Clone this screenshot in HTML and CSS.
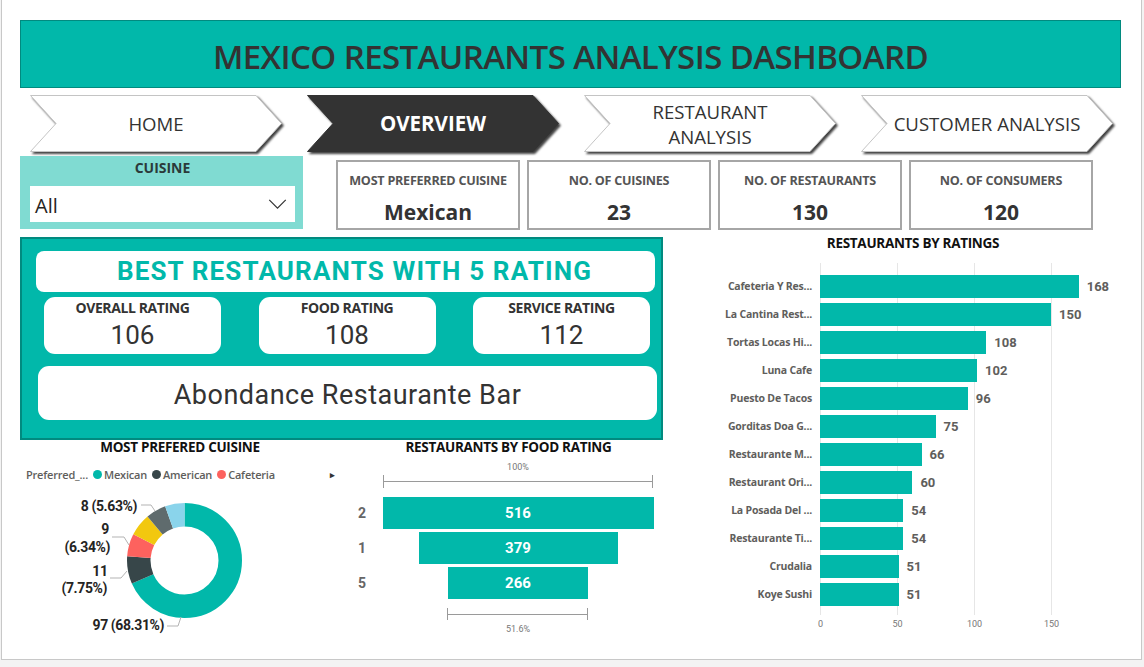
FILE: index.html
```html
<!DOCTYPE html>
<html>
<head>
<meta charset="utf-8">
<title>Mexico Restaurants Analysis Dashboard</title>
<link rel="stylesheet" href="styles.css">
</head>
<body>
<div class="canvas">
  <header class="title">MEXICO RESTAURANTS ANALYSIS DASHBOARD</header>

  <nav class="nav">
    <div class="nav-item">
      <svg class="arrow" viewBox="0 0 252 57"><polygon points="0.5,0.5 226,0.5 251.5,28.5 226,56.5 0.5,56.5 26,28.5"/></svg>
      <span class="nav-label">HOME</span>
    </div>
    <div class="nav-item active">
      <svg class="arrow" viewBox="0 0 252 57"><polygon points="0.5,0.5 226,0.5 251.5,28.5 226,56.5 0.5,56.5 26,28.5"/></svg>
      <span class="nav-label">OVERVIEW</span>
    </div>
    <div class="nav-item">
      <svg class="arrow" viewBox="0 0 252 57"><polygon points="0.5,0.5 226,0.5 251.5,28.5 226,56.5 0.5,56.5 26,28.5"/></svg>
      <span class="nav-label">RESTAURANT<br>ANALYSIS</span>
    </div>
    <div class="nav-item">
      <svg class="arrow" viewBox="0 0 252 57"><polygon points="0.5,0.5 226,0.5 251.5,28.5 226,56.5 0.5,56.5 26,28.5"/></svg>
      <span class="nav-label">CUSTOMER ANALYSIS</span>
    </div>
  </nav>

  <section class="row2">
    <div class="slicer">
      <div class="slicer-title">CUISINE</div>
      <div class="dropdown">
        <span class="dropdown-value">All</span>
        <svg class="chev" viewBox="0 0 20 12"><polyline points="1,1 10,10 19,1"/></svg>
      </div>
    </div>
    <div class="kpis">
      <div class="kpi"><div class="kpi-label">MOST PREFERRED CUISINE</div><div class="kpi-value">Mexican</div></div>
      <div class="kpi"><div class="kpi-label">NO. OF CUISINES</div><div class="kpi-value">23</div></div>
      <div class="kpi"><div class="kpi-label">NO. OF RESTAURANTS</div><div class="kpi-value">130</div></div>
      <div class="kpi"><div class="kpi-label">NO. OF CONSUMERS</div><div class="kpi-value">120</div></div>
    </div>
  </section>

  <section class="main">
    <div class="left">
      <div class="best">
        <div class="best-head">BEST RESTAURANTS WITH 5 RATING</div>
        <div class="ratings">
          <div class="rating"><div class="rating-label">OVERALL RATING</div><div class="rating-value">106</div></div>
          <div class="rating"><div class="rating-label">FOOD RATING</div><div class="rating-value">108</div></div>
          <div class="rating"><div class="rating-label">SERVICE RATING</div><div class="rating-value">112</div></div>
        </div>
        <div class="best-name">Abondance Restaurante Bar</div>
      </div>

      <div class="charts">
        <div class="donut-chart">
          <div class="chart-title">MOST PREFERED CUISINE</div>
          <div class="legend">
            <span class="legend-title">Preferred_...</span>
            <span class="legend-item"><i class="dot teal"></i>Mexican</span>
            <span class="legend-item"><i class="dot dark"></i>American</span>
            <span class="legend-item"><i class="dot red"></i>Cafeteria</span>
            <span class="legend-more">&#9656;</span>
          </div>
          <svg class="donut" viewBox="0 0 320 170" width="320" height="170">
            <g transform="rotate(-90 164.5 75.5)" fill="none" stroke-width="23.5">
              <circle cx="164.5" cy="75.5" r="45.75" stroke="#01B8AA" stroke-dasharray="196.36 287.46" stroke-dashoffset="0"/>
              <circle cx="164.5" cy="75.5" r="45.75" stroke="#374649" stroke-dasharray="22.27 287.46" stroke-dashoffset="-196.36"/>
              <circle cx="164.5" cy="75.5" r="45.75" stroke="#FD625E" stroke-dasharray="18.22 287.46" stroke-dashoffset="-218.63"/>
              <circle cx="164.5" cy="75.5" r="45.75" stroke="#F2C80F" stroke-dasharray="18.22 287.46" stroke-dashoffset="-236.85"/>
              <circle cx="164.5" cy="75.5" r="45.75" stroke="#5F6B6D" stroke-dasharray="16.20 287.46" stroke-dashoffset="-255.07"/>
              <circle cx="164.5" cy="75.5" r="45.75" stroke="#8AD4EB" stroke-dasharray="16.20 287.46" stroke-dashoffset="-271.27"/>
            </g>
            <g class="leaders" fill="none" stroke="#b3b3b3" stroke-width="1">
              <polyline points="121,20 131,20 135,26"/>
              <polyline points="92,52 104,52 109,60"/>
              <polyline points="90,93 101,93 107,86"/>
              <polyline points="147,141 158,141 161,132"/>
            </g>
            <g class="dlabels">
              <text x="117" y="26" text-anchor="end">8 (5.63%)</text>
              <text x="85" y="49" text-anchor="middle">9</text>
              <text x="90" y="67" text-anchor="end">(6.34%)</text>
              <text x="80" y="91" text-anchor="middle">11</text>
              <text x="87" y="108" text-anchor="end">(7.75%)</text>
              <text x="144" y="145" text-anchor="end">97 (68.31%)</text>
            </g>
          </svg>
        </div>

        <div class="funnel-chart">
          <div class="chart-title funnel-title">RESTAURANTS BY FOOD RATING</div>
          <div class="funnel-body">
            <div class="pct">100%</div>
            <div class="bracket bracket-top"></div>
            <div class="funnel-rows">
              <div class="frow"><span class="flabel">2</span><div class="ftrack"><div class="fbar" style="width:271px">516</div></div></div>
              <div class="frow"><span class="flabel">1</span><div class="ftrack"><div class="fbar" style="width:199px">379</div></div></div>
              <div class="frow"><span class="flabel">5</span><div class="ftrack"><div class="fbar" style="width:140px">266</div></div></div>
            </div>
            <div class="bracket bracket-bottom"></div>
            <div class="pct">51.6%</div>
          </div>
        </div>
      </div>
    </div>

    <div class="right">
      <div class="chart-title">RESTAURANTS BY RATINGS</div>
      <div class="bar-body">
        <div class="cat-labels">
          <span>Cafeteria Y Res...</span>
          <span>La Cantina Rest...</span>
          <span>Tortas Locas Hi...</span>
          <span>Luna Cafe</span>
          <span>Puesto De Tacos</span>
          <span>Gorditas Doa G...</span>
          <span>Restaurante M...</span>
          <span>Restaurant Ori...</span>
          <span>La Posada Del ...</span>
          <span>Restaurante Ti...</span>
          <span>Crudalia</span>
          <span>Koye Sushi</span>
        </div>
        <div class="plot">
          <div class="brow"><div class="bar" style="width:258.7px"></div><span class="bval">168</span></div>
          <div class="brow"><div class="bar" style="width:231px"></div><span class="bval">150</span></div>
          <div class="brow"><div class="bar" style="width:166.3px"></div><span class="bval">108</span></div>
          <div class="brow"><div class="bar" style="width:157.1px"></div><span class="bval">102</span></div>
          <div class="brow"><div class="bar" style="width:147.8px"></div><span class="bval">96</span></div>
          <div class="brow"><div class="bar" style="width:115.5px"></div><span class="bval">75</span></div>
          <div class="brow"><div class="bar" style="width:101.6px"></div><span class="bval">66</span></div>
          <div class="brow"><div class="bar" style="width:92.4px"></div><span class="bval">60</span></div>
          <div class="brow"><div class="bar" style="width:83.2px"></div><span class="bval">54</span></div>
          <div class="brow"><div class="bar" style="width:83.2px"></div><span class="bval">54</span></div>
          <div class="brow"><div class="bar" style="width:78.5px"></div><span class="bval">51</span></div>
          <div class="brow"><div class="bar" style="width:78.5px"></div><span class="bval">51</span></div>
        </div>
        <div></div>
        <div class="ticks"><span>0</span><span>50</span><span>100</span><span>150</span></div>
      </div>
    </div>
  </section>
</div>
</body>
</html>
```

FILE: styles.css
```css
* { box-sizing: border-box; }

body {
  margin: 0;
  background: #f3f3f3;
  font-family: "Open Sans", "Noto Sans", sans-serif;
  color: #333;
}

.canvas {
  width: 1141px;
  height: 660px;
  margin-left: 1px;
  background: #fff;
  border-left: 1px solid #c8c8c8;
  border-right: 1px solid #c8c8c8;
  border-bottom: 1px solid #c8c8c8;
  padding: 20px 0 0 18px;
}

/* Title */
.title {
  width: 1101px;
  height: 68px;
  background: #01b8aa;
  border: 1px solid #018a7f;
  display: flex;
  align-items: center;
  justify-content: center;
  padding-top: 5px;
  font-size: 33px;
  font-weight: 600;
  letter-spacing: -0.6px;
  color: #333;
}

/* Navigation */
.nav {
  display: flex;
  gap: 25px;
  margin: 7px 0 0 10px;
  height: 57px;
}
.nav-item {
  width: 252px;
  height: 57px;
  display: grid;
}
.nav-item > * { grid-area: 1 / 1; }
.arrow {
  width: 252px;
  height: 57px;
  overflow: visible;
  filter: drop-shadow(2px 2px 1px rgba(0, 0, 0, 0.75));
}
.arrow polygon {
  fill: #fff;
  stroke: #c4c4c4;
  stroke-width: 1;
}
.nav-item.active .arrow polygon {
  fill: #333;
  stroke: #333;
}
.nav-label {
  position: relative;
  place-self: center;
  text-align: center;
  font-size: 18.6px;
  line-height: 25px;
  color: #333;
}
.nav-item.active .nav-label {
  color: #fff;
  font-weight: 700;
  font-size: 20.5px;
}

/* Row 2 */
.row2 {
  display: flex;
  align-items: flex-start;
  margin-top: 4px;
  height: 74px;
}
.slicer {
  width: 283px;
  height: 73px;
  background: #80dbd2;
  padding: 4px 8px 0 10px;
}
.slicer-title {
  text-align: center;
  font-size: 14px;
  line-height: 16px;
  font-weight: 700;
  color: #2b3a3a;
}
.dropdown {
  margin-top: 10px;
  height: 36px;
  background: #fff;
  display: flex;
  align-items: center;
  justify-content: space-between;
  padding: 0 8px 0 5px;
}
.dropdown-value {
  font-size: 20px;
  color: #252423;
  padding-top: 3px;
}
.chev {
  width: 19px;
  height: 11px;
  fill: none;
  stroke: #333;
  stroke-width: 1.3;
}

.kpis {
  display: flex;
  gap: 7px;
  margin: 4px 0 0 33px;
}
.kpi {
  width: 184px;
  height: 70px;
  border: 2px solid #a6a6a6;
  padding-top: 10px;
  text-align: center;
}
.kpi-label {
  font-size: 12.6px;
  line-height: 18px;
  font-weight: 700;
  color: #555;
  letter-spacing: -0.25px;
}
.kpi-value {
  margin-top: 8px;
  font-size: 21px;
  line-height: 28px;
  font-weight: 700;
  color: #333;
}

/* Main */
.main {
  display: flex;
  margin-top: 7px;
}
.left { width: 643px; }

.best {
  height: 203px;
  background: #01b8aa;
  border: 2px solid #018a7f;
  padding: 12px 0 0 14px;
}
.best-head {
  width: 619px;
  height: 41px;
  background: #fff;
  border-radius: 8px;
  text-align: center;
  padding-left: 18px;
  font-family: Roboto, "Open Sans", sans-serif;
  font-size: 26px;
  line-height: 41px;
  font-weight: 700;
  color: #01b8aa;
  letter-spacing: 1.15px;
}
.ratings {
  display: flex;
  justify-content: space-between;
  width: 606px;
  margin: 5px 0 0 8px;
}
.rating {
  width: 177px;
  height: 57px;
  background: #fff;
  border-radius: 11px;
  text-align: center;
  padding-top: 1px;
}
.rating-label {
  font-size: 14px;
  line-height: 19px;
  font-weight: 700;
  color: #333;
  letter-spacing: -0.4px;
}
.rating-value {
  font-family: Roboto, "Open Sans", sans-serif;
  font-size: 26px;
  line-height: 36px;
  color: #333;
}
.best-name {
  width: 619px;
  height: 54px;
  margin: 12px 0 0 2px;
  background: #fff;
  border-radius: 11px;
  text-align: center;
  font-family: Roboto, "Open Sans", sans-serif;
  font-size: 27px;
  line-height: 58px;
  letter-spacing: 0.5px;
  color: #333;
}

.charts { display: flex; }

.chart-title {
  text-align: center;
  font-size: 13.5px;
  line-height: 16px;
  font-weight: 700;
  color: #111;
  letter-spacing: -0.3px;
}

/* Donut */
.donut-chart {
  width: 320px;
  display: flex;
  flex-direction: column;
}
.donut-chart .chart-title { margin-top: -1px; }
.legend {
  display: flex;
  align-items: center;
  margin-top: 12px;
  height: 14px;
  padding-left: 6px;
  font-size: 11px;
  font-weight: 600;
  color: #605e5c;
  letter-spacing: -0.2px;
}
.legend-title { margin-right: 5px; }
.legend-item {
  display: flex;
  align-items: center;
  margin-right: 5px;
}
.dot {
  width: 9px;
  height: 9px;
  border-radius: 50%;
  margin-right: 2px;
}
.dot.teal { background: #01b8aa; }
.dot.dark { background: #374649; }
.dot.red { background: #fd625e; }
.legend-more {
  margin-left: auto;
  font-size: 9px;
  color: #333;
  width: 10px;
}
.donut { display: block; margin-top: 4px; }
.dlabels text {
  font-family: Roboto, "Open Sans", sans-serif;
  font-size: 14px;
  font-weight: 700;
  fill: #252423;
  letter-spacing: -0.4px;
}

/* Funnel */
.funnel-chart {
  width: 323px;
  display: flex;
  flex-direction: column;
}
.funnel-title {
  margin-top: -1px;
  padding-left: 14px;
}
.funnel-body {
  width: 314px;
}
.pct {
  margin-left: 42px;
  width: 272px;
  text-align: center;
  font-size: 9px;
  line-height: 12px;
  color: #777;
  font-family: Roboto, sans-serif;
}
.funnel-body > .pct:first-child { margin-top: 6px; }
.bracket {
  height: 13px;
  margin-top: 2px;
  border-left: 1px solid #9a9a9a;
  border-right: 1px solid #9a9a9a;
  background: linear-gradient(#9a9a9a, #9a9a9a) center / 100% 1px no-repeat;
}
.bracket-top {
  margin-left: 43px;
  width: 270px;
}
.bracket-bottom {
  margin-left: 107px;
  width: 141px;
  margin-top: 9px;
  height: 12px;
}
.bracket-bottom + .pct { margin-top: 3px; }
.funnel-rows {
  margin-top: 9px;
  display: flex;
  flex-direction: column;
  gap: 3px;
}
.frow {
  display: flex;
  align-items: center;
  height: 32px;
}
.flabel {
  width: 42px;
  padding-left: 18px;
  font-family: Roboto, sans-serif;
  font-size: 14px;
  font-weight: 700;
  color: #666;
}
.ftrack {
  width: 272px;
  display: flex;
  justify-content: center;
}
.fbar {
  height: 32px;
  background: #01b8aa;
  color: #fff;
  text-align: center;
  font-family: Roboto, sans-serif;
  font-weight: 700;
  font-size: 15px;
  line-height: 32px;
}

/* Bar chart */
.right {
  width: 446px;
  margin-left: 27px;
  margin-top: -2px;
}
.bar-body {
  display: grid;
  grid-template-columns: 122px 300px;
  column-gap: 8px;
  margin-top: 12px;
}
.cat-labels {
  display: flex;
  flex-direction: column;
  padding-top: 9px;
}
.cat-labels span {
  height: 28px;
  line-height: 28px;
  text-align: right;
  font-size: 10.5px;
  font-weight: 700;
  color: #605e5c;
  white-space: nowrap;
  letter-spacing: -0.2px;
}
.plot {
  padding: 9px 0 7px 0;
  background-image: repeating-linear-gradient(to right, #e6e6e6 0, #e6e6e6 1px, transparent 1px, transparent 77px);
  background-size: 232px 100%;
  background-repeat: no-repeat;
}
.brow {
  height: 28px;
  display: flex;
  align-items: center;
}
.bar {
  height: 23px;
  background: #01b8aa;
}
.bval {
  margin-left: 8px;
  font-family: Roboto, sans-serif;
  font-size: 13px;
  font-weight: 700;
  color: #605e5c;
}
.ticks {
  display: flex;
  margin: 3px 0 0 -38px;
}
.ticks span {
  width: 77px;
  text-align: center;
  font-size: 9px;
  line-height: 12px;
  color: #777;
  font-family: Roboto, sans-serif;
}
```
